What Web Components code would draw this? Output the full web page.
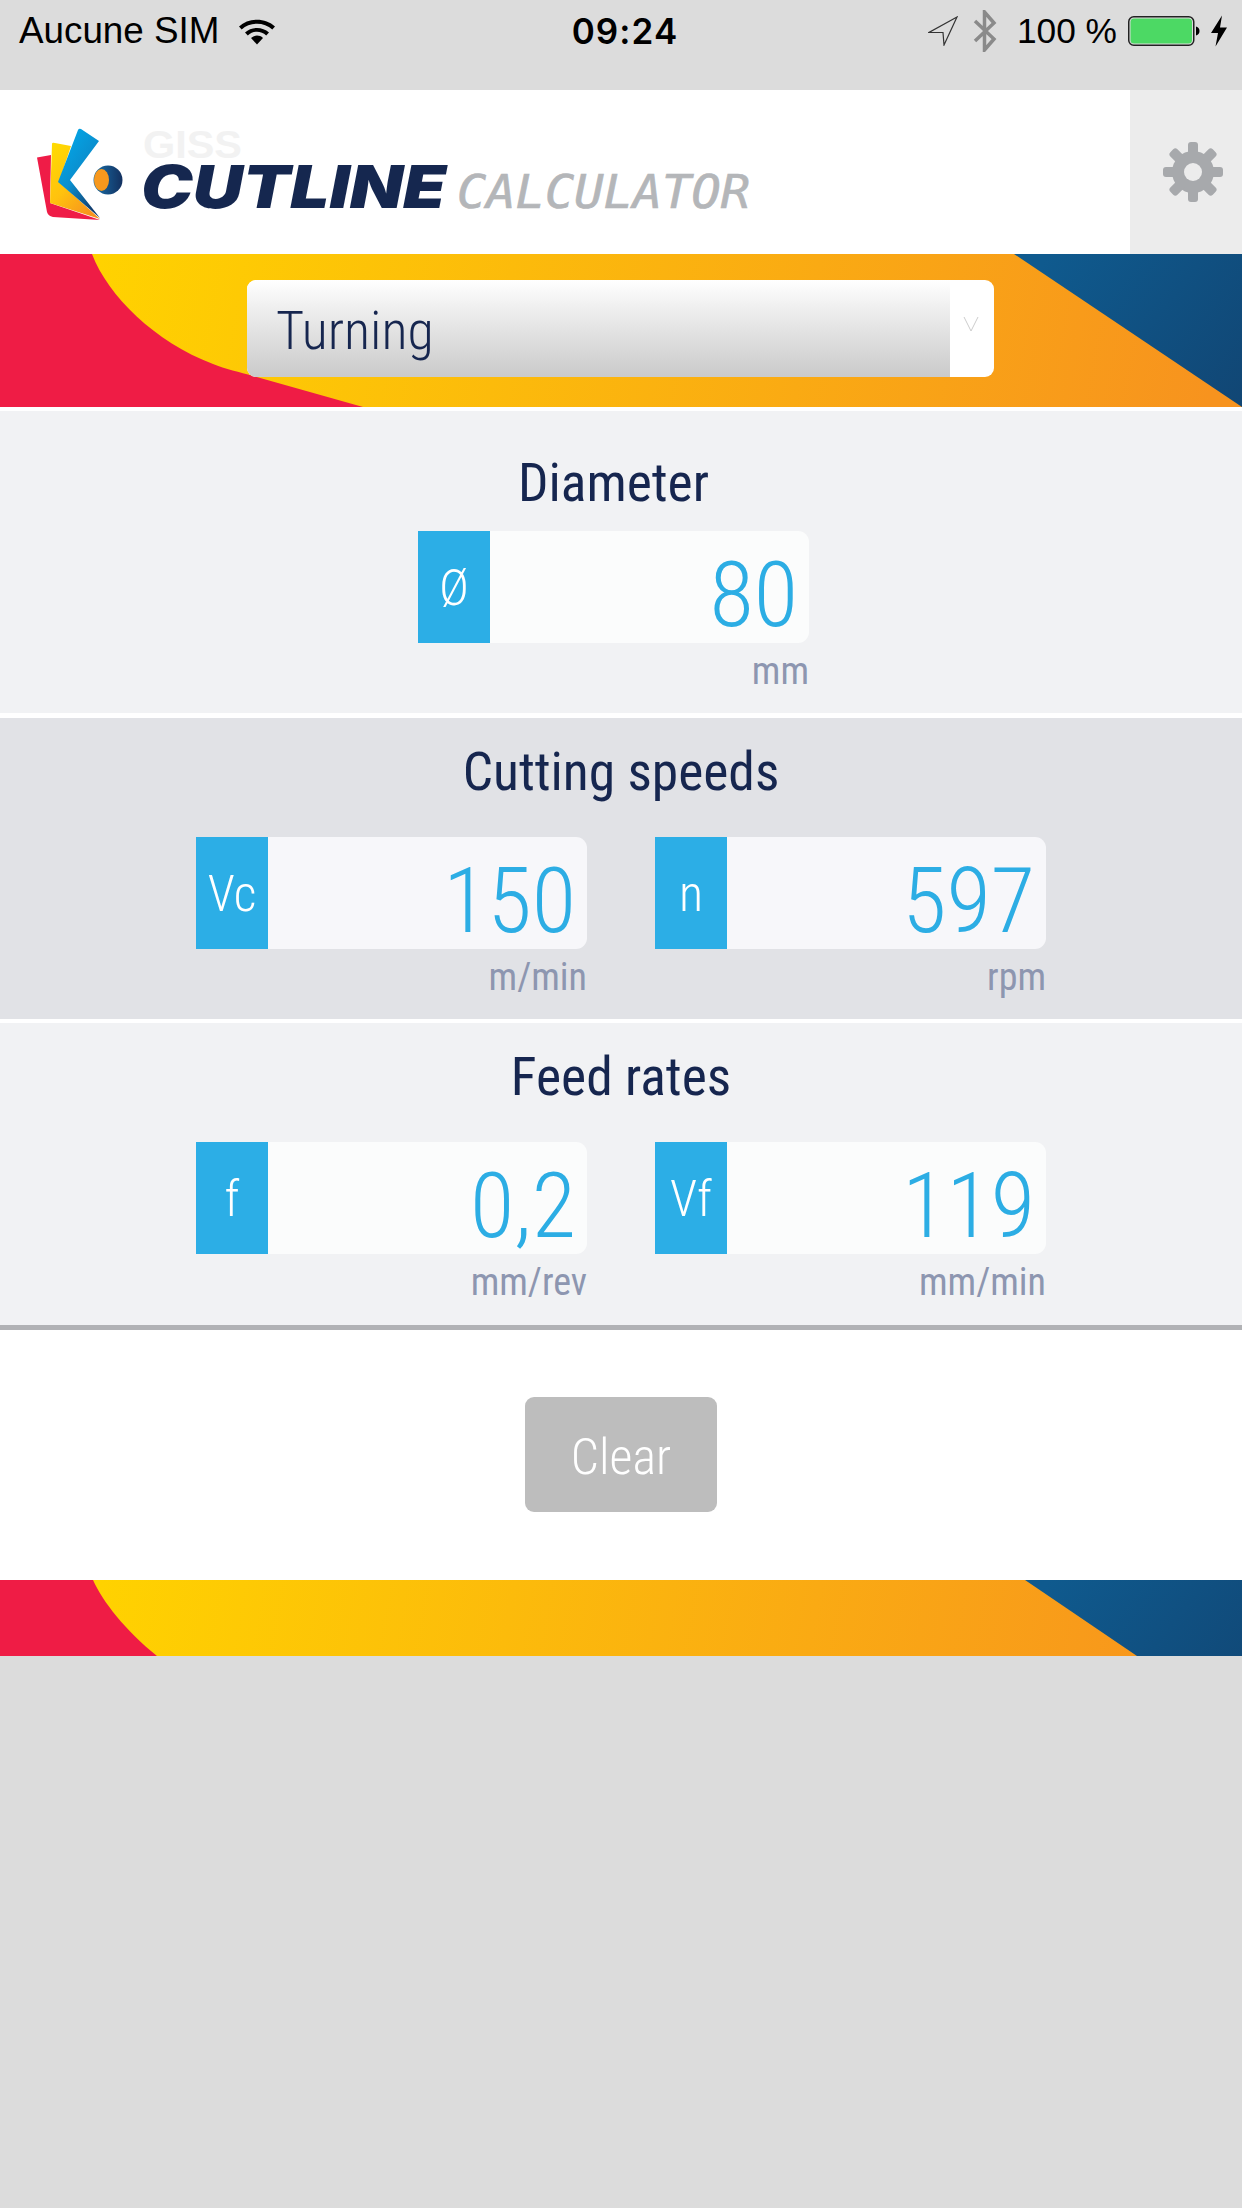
<!DOCTYPE html>
<html lang="en">
<head>
<meta charset="UTF-8">
<title>Cutline Calculator</title>
<style>
  html, body { margin: 0; padding: 0; background: #dcdcdc; }
  body { width: 1242px; height: 2208px; overflow: hidden; font-family: Roboto, sans-serif; }
</style>
</head>
<body>

<status-bar></status-bar>
<app-header></app-header>
<color-banner size="big"><mode-select>Turning</mode-select></color-banner>

<calc-section tone="light" title="Diameter" first>
  <calc-field label="Ø" value="80" unit="mm"></calc-field>
</calc-section>
<calc-section tone="dark" title="Cutting speeds">
  <calc-field label="Vc" value="150" unit="m/min"></calc-field>
  <calc-field label="n" value="597" unit="rpm"></calc-field>
</calc-section>
<calc-section tone="light" title="Feed rates" last>
  <calc-field label="f" value="0,2" unit="mm/rev"></calc-field>
  <calc-field label="Vf" value="119" unit="mm/min"></calc-field>
</calc-section>

<clear-bar>Clear</clear-bar>
<color-banner size="small"></color-banner>

<script>
(function (customElements) {
  'use strict';

  class StatusBar extends HTMLElement {
    constructor() {
      super();
      this.attachShadow({mode: 'open'}).innerHTML = `
        <style>
          :host { display: block; height: 90px; background: #dcdcdc; color: #000;
                  font: 35.300px/1 "Liberation Sans", Arial, sans-serif; }
          .bar { display: flex; align-items: flex-start; height: 62px; padding: 0 14px 0 19px; }
          .side { display: flex; align-items: center; height: 62px; }
          .left { flex: 1; }
          .right { flex: 1; justify-content: flex-end; }
          .aucune { font-size: 36.800px; }
          .time { height: 62px; line-height: 62px; font-size: 35px; font-family: Inter, "Liberation Sans", sans-serif; font-weight: 600; letter-spacing: 1.100px; padding-left: 3px; }
          svg { display: block; }
        </style>
        <div class="bar">
          <div class="side left">
            <span class="aucune">Aucune SIM</span>
            <svg width="38" height="28" viewBox="0 0 38 28" style="margin-left:19px">
              <path d="M1 9.500C10.500 .5 27.500 .5 37 9.500L34.300 12.400C26 4.800 12 4.800 3.700 12.400Z"/>
              <path d="M7 15.500C13.500 9.500 24.500 9.500 31 15.500L28.200 18.400C23 13.600 15 13.600 9.800 18.400Z"/>
              <path d="M13 21C16.500 17.800 21.500 17.800 25 21L19 27.500Z"/>
            </svg>
          </div>
          <div class="time">09:24</div>
          <div class="side right">
            <svg width="30" height="30" viewBox="0 0 30 30" style="margin-right:15px">
              <path d="M29 1L1 16.500H15L16 29Z" fill="none" stroke="#333" stroke-width="1.200"/>
            </svg>
            <svg width="24" height="42" viewBox="0 0 24 42" style="margin-right:20px">
              <path d="M2 11L21 29L11.500 40V2L21 13L2 31" fill="none" stroke="#8a8a8a" stroke-width="3.500"/>
            </svg>
            <span>100 %</span>
            <svg width="72" height="32" viewBox="0 0 72 32" style="margin-left:11px">
              <rect x=".75" y="1.750" width="65" height="28.500" rx="5" fill="none" stroke="#222" stroke-width="1.500"/>
              <rect x="2.500" y="3.500" width="61.500" height="25" rx="3.500" fill="#4cd964"/>
              <path d="M68 11.500C70.500 12 71.500 14 71.500 16S70.500 20 68 20.500Z"/>
            </svg>
            <svg width="18" height="32" viewBox="0 0 18 32" style="margin-left:10px">
              <path d="M12 .5L1 18H8L5.500 31.500L17 12.500H10Z"/>
            </svg>
          </div>
        </div>`;
    }
  }

  class AppHeader extends HTMLElement {
    constructor() {
      super();
      this.attachShadow({mode: 'open'}).innerHTML = `
        <style>
          :host { display: flex; height: 164px; background: #fff; }
          .logo { flex: 1; }
          .gear { width: 112px; background: #ececec; display: flex; align-items: center; justify-content: center; padding-left: 14px; box-sizing: border-box; }
          svg { display: block; }
        </style>
        <div class="logo">
          <svg width="780" height="164" viewBox="0 90 780 164">
            <defs>
              <linearGradient id="y" x1="0" y1="0" x2=".7" y2="1">
                <stop offset="0" stop-color="#ffdd00"/><stop offset=".55" stop-color="#ffc20e"/><stop offset="1" stop-color="#f7931e"/>
              </linearGradient>
              <linearGradient id="b" x1="0" y1="0" x2=".7" y2="1">
                <stop offset="0" stop-color="#00aeef"/><stop offset=".55" stop-color="#0a8fcf"/><stop offset="1" stop-color="#123a6b"/>
              </linearGradient>
              <linearGradient id="c" x1="0" y1="0" x2="1" y2="0">
                <stop offset="0" stop-color="#1a6fa8"/><stop offset="1" stop-color="#12305f"/>
              </linearGradient>
            </defs>
            <path d="M37 157.500L51 155L50 203L100 220L53 217Q48 216 47 212Z" fill="#ef1c47"/>
            <path d="M52 144Q52 142 55 143L71 146L59 182L100 219L50 203Z" fill="url(#y)"/>
            <path d="M78 130Q79 128 81 129L99 141L70 180L100 218L58 182Z" fill="url(#b)"/>
            <circle cx="108" cy="180" r="14.500" fill="url(#c)"/>
            <ellipse cx="101.500" cy="180" rx="7.500" ry="11" fill="#f7981d"/>
            <text x="143" y="158" font-family="Liberation Sans" font-weight="bold" font-size="38" fill="#f2f2f2" textLength="99" lengthAdjust="spacingAndGlyphs">GISS</text>
            <text x="141" y="208" font-family="Inter" font-weight="900" font-style="italic" font-size="59" fill="#15274f" textLength="305" lengthAdjust="spacingAndGlyphs">CUTLINE</text>
            <text x="457" y="208" font-family="DejaVu Sans Mono" font-style="italic" font-size="46" fill="#b4b6b9" stroke="#b4b6b9" stroke-width=".7" textLength="293" lengthAdjust="spacingAndGlyphs">CALCULATOR</text>
          </svg>
        </div>
        <div class="gear">
          <svg width="62" height="62" viewBox="0 0 62 62">
            <g fill="#a7a9ac">
              <circle cx="31" cy="31" r="21"/>
              <rect x="26" y="1" width="10" height="60" rx="3"/>
              <rect x="26" y="1" width="10" height="60" rx="3" transform="rotate(45 31 31)"/>
              <rect x="26" y="1" width="10" height="60" rx="3" transform="rotate(90 31 31)"/>
              <rect x="26" y="1" width="10" height="60" rx="3" transform="rotate(135 31 31)"/>
            </g>
            <circle cx="31" cy="31" r="9" fill="#ececec"/>
          </svg>
        </div>`;
    }
  }

  class ColorBanner extends HTMLElement {
    constructor() {
      super();
      const big = this.getAttribute('size') === 'big';
      const h = big ? 153 : 76;
      const red = big
        ? 'M0 0H92C108 42 155 88 213 110C225 115 240 118 253 122L363 153H0Z'
        : 'M0 0H93C103 22 125 50 157 76H0Z';
      const blue = big ? 'M1014 0H1242V153Z' : 'M1025 0H1242V76H1137Z';
      this.attachShadow({mode: 'open'}).innerHTML = `
        <style>
          :host { display: block; position: relative; height: ${h}px; }
          svg { display: block; position: absolute; left: 0; top: 0; }
          .over { position: relative; height: 100%; display: flex; padding: 26px 0 0 247px; box-sizing: border-box; }
        </style>
        <svg width="1242" height="${h}" viewBox="0 0 1242 ${h}">
          <defs>
            <linearGradient id="o" gradientUnits="userSpaceOnUse" x1="100" y1="0" x2="1200" y2="200">
              <stop offset="0" stop-color="#ffd200"/><stop offset="1" stop-color="#f7931e"/>
            </linearGradient>
            <linearGradient id="bl" gradientUnits="userSpaceOnUse" x1="1050" y1="0" x2="1242" y2="153">
              <stop offset="0" stop-color="#0f5a8e"/><stop offset="1" stop-color="#114674"/>
            </linearGradient>
          </defs>
          <rect width="1242" height="${h}" fill="url(#o)"/>
          <path d="${red}" fill="#ef1c45"/>
          <path d="${blue}" fill="url(#bl)"/>
        </svg>
        <div class="over"><slot></slot></div>`;
    }
  }

  class ModeSelect extends HTMLElement {
    constructor() {
      super();
      this.attachShadow({mode: 'open'}).innerHTML = `
        <style>
          :host { display: flex; width: 747px; height: 97px; border-radius: 9px; overflow: hidden; background: #fff; }
          .txt { width: 703px; box-sizing: border-box; padding: 4px 0 0 29px;
                 background: linear-gradient(#fff, #f1f1f1 25%, #cbcbcb 98%);
                 font: 300 54px/93px Roboto, sans-serif; color: #16264f; font-stretch: 75%; }
          .arr { flex: 1; display: flex; align-items: center; justify-content: center; }
          svg { display: block; margin-left: -2px; margin-top: -10px; }
        </style>
        <div class="txt"><slot></slot></div>
        <div class="arr"><svg width="16" height="16" viewBox="0 0 16 16"><path d="M1 1L8 15L15 1" fill="none" stroke="#ccc" stroke-width="1"/></svg></div>`;
    }
  }

  class CalcSection extends HTMLElement {
    constructor() {
      super();
      const first = this.hasAttribute('first');
      const last = this.hasAttribute('last');
      const dark = this.getAttribute('tone') === 'dark';
      this.attachShadow({mode: 'open'}).innerHTML = `
        <style>
          :host { display: block; background: #fff; --input-bg: ${dark ? '#f7f7fa' : '#fbfcfc'}; padding-top: ${first ? 4 : 0}px; }
          .in { height: ${first ? 302 : last ? 302 : 301}px; background: ${dark ? '#e1e2e6' : '#f1f2f4'}; box-sizing: border-box;
                padding-top: ${first ? 42 : 24}px; padding-right: ${first ? 15 : 0}px; }
          h2 { margin: 0; height: 60px; font: 400 53.500px/60px Roboto, sans-serif; color: #16264f; text-align: center; font-stretch: 75%; }
          .row { display: flex; justify-content: center; gap: 68px; margin-top: ${first ? 18 : 35}px; }
          .line { height: ${first || last ? 5 : 4}px; background: ${last ? '#b1b2b5' : '#fff'}; }
        </style>
        <div class="in">
          <h2>${this.getAttribute('title')}</h2>
          <div class="row"><slot></slot></div>
        </div>
        <div class="line"></div>`;
    }
  }

  class CalcField extends HTMLElement {
    constructor() {
      super();
      const a = (n) => this.getAttribute(n);
      this.attachShadow({mode: 'open'}).innerHTML = `
        <style>
          :host { display: block; width: 391px; font-family: Roboto, sans-serif; font-stretch: 75%; }
          .box { display: flex; height: 112px; }
          .lab { width: 72px; background: #2caee6; color: #fff; font-weight: 300; font-size: 50px; line-height: 114px; height: 112px; text-align: center; }
          .val { flex: 1; background: var(--input-bg); border-radius: 0 11px 11px 0; color: #2cade4; font-weight: 300; font-size: 91px; line-height: 128px; height: 112px; text-align: right; padding-right: 11px; }
          .unit { margin-top: 6px; height: 44px; font-size: 38px; line-height: 44px; text-align: right; color: #8d96b0; }
        </style>
        <div class="box"><div class="lab">${a('label')}</div><div class="val">${a('value')}</div></div>
        <div class="unit">${a('unit')}</div>`;
    }
  }

  class ClearBar extends HTMLElement {
    constructor() {
      super();
      this.attachShadow({mode: 'open'}).innerHTML = `
        <style>
          :host { display: flex; justify-content: center; background: #fff; height: 250px; padding-top: 67px; box-sizing: border-box; }
          button { width: 192px; height: 115px; border: 0; border-radius: 9px; background: #bdbdbd; color: #fff; padding: 5px 0 0;
                   font: 300 50px/110px Roboto, sans-serif; font-stretch: 75%; }
        </style>
        <button><slot></slot></button>`;
    }
  }

  customElements.define('status-bar', StatusBar);
  customElements.define('app-header', AppHeader);
  customElements.define('color-banner', ColorBanner);
  customElements.define('mode-select', ModeSelect);
  customElements.define('calc-section', CalcSection);
  customElements.define('calc-field', CalcField);
  customElements.define('clear-bar', ClearBar);
})(window.customElements);
</script>
</body>
</html>
